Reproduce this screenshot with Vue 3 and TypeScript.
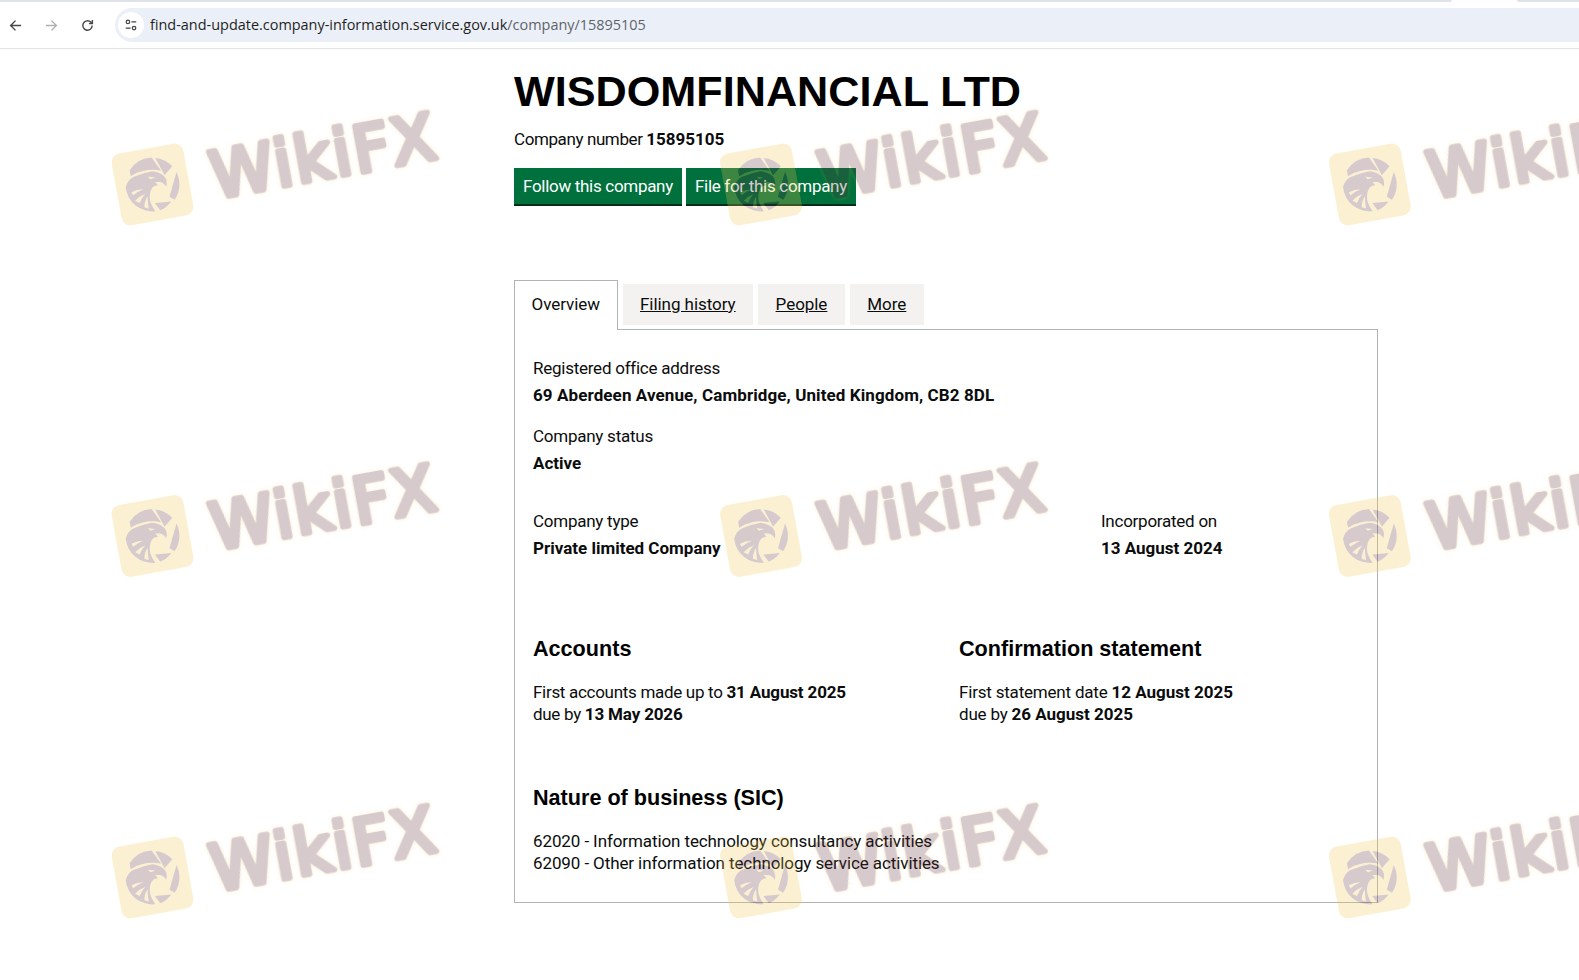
<template>
  <div class="screen">
    <header class="browser">
      <div class="tabstrip">
        <span class="strip-left"></span>
        <span class="strip-right"></span>
      </div>
      <div class="toolbar">
        <svg class="nav-icon" viewBox="0 0 16 16"><path d="M14 8H3M8 2.8 2.8 8 8 13.200" /></svg>
        <svg class="nav-icon nav-off" viewBox="0 0 16 16"><path d="M2 8h11M8 2.800 13.200 8 8 13.200" /></svg>
        <svg class="nav-icon" viewBox="0 0 16 16"><path d="M13 8a5 5 0 1 1-1.500-3.600L13 6M13.200 2.200V6H9.500" /></svg>
        <div class="omnibox">
          <span class="site-chip">
            <svg viewBox="0 0 16 16"><circle cx="4.500" cy="4.500" r="2" /><path d="M8.500 4.500H14M2 11.500h5.500" /><circle cx="11.500" cy="11.500" r="2" /></svg>
          </span>
          <span class="url">find-and-update.company-information.service.gov.uk<span class="url-path">/company/15895105</span></span>
        </div>
      </div>
    </header>

    <main class="page">
      <h1>WISDOMFINANCIAL LTD</h1>
      <p class="company-number">Company number <strong>15895105</strong></p>
      <div class="actions">
        <a class="button">Follow this company</a>
        <a class="button">File for this company</a>
      </div>

      <nav class="tabs">
        <span class="tab active">Overview</span>
        <a v-for="tab in tabs" :key="tab" class="tab">{{ tab }}</a>
      </nav>

      <section class="panel">
        <dl class="field first">
          <dt>Registered office address</dt>
          <dd class="address">69 Aberdeen Avenue, Cambridge, United Kingdom, CB2 8DL</dd>
        </dl>
        <dl class="field status">
          <dt>Company status</dt>
          <dd>Active</dd>
        </dl>
        <div class="type-row">
          <dl class="field type">
            <dt>Company type</dt>
            <dd>Private limited Company</dd>
          </dl>
          <dl class="field">
            <dt>Incorporated on</dt>
            <dd>13 August 2024</dd>
          </dl>
        </div>
        <div class="due-row">
          <div class="accounts">
            <h2>Accounts</h2>
            <p>First accounts made up to <strong>31 August 2025</strong></p>
            <p>due by <strong>13 May 2026</strong></p>
          </div>
          <div>
            <h2>Confirmation statement</h2>
            <p>First statement date <strong>12 August 2025</strong></p>
            <p>due by <strong>26 August 2025</strong></p>
          </div>
        </div>
        <div class="sic">
          <h2>Nature of business (SIC)</h2>
          <p v-for="code in sicCodes" :key="code">{{ code }}</p>
        </div>
      </section>
    </main>

    <svg class="watermark" width="1579" height="980" viewBox="0 0 1579 980">
      <defs>
        <g id="wm-mark">
          <path d="M-20-18A27 27 0 0 1 4-26.700L11-12Q2-15.500-7-15-14-15-20-12Z" />
          <path d="M7.400-25.500A27 27 0 0 1 22.800-14.400L13.500-7Z" />
          <path d="M25.800-8A27 27 0 0 1 19 19L14.500 15Z" />
          <path d="M-1 18.500 15.500 20A27 27 0 0 1 3 26.800Z" />
          <path fill-rule="evenodd" d="M-26.900-2Q-24-9-17-11-8-13 2-13 9-11 13-6 16-1 13 5 12 1 8-1L3-2Q5 0 5 2 0 1-3 6-6 12-5 18-4 23-2 26.900A27 27 0 0 1-26.900-2ZM-3-8.500 4-6.500-1-5.500ZM-22 4Q-16 2-10 3-15 4-21 7ZM-20 13Q-15 9-9 8-13 11-16 16ZM-12 21Q-11 15-7 11-8 17-8 23Z" />
        </g>
        <mask id="wm-plate" maskUnits="userSpaceOnUse" x="-50" y="-50" width="100" height="100">
          <rect x="-50" y="-50" width="100" height="100" fill="white" />
          <use href="#wm-mark" fill="black" />
        </mask>
      </defs>
      <g v-for="mark in marks" :key="mark.id" :transform="mark.transform">
        <rect class="wm-plate" x="-36.500" y="-36.500" width="73" height="73" rx="9" mask="url(#wm-plate)" />
        <use class="wm-mark" href="#wm-mark" />
        <text class="wm-text" x="59" y="25" textLength="227">WikiFX</text>
      </g>
    </svg>
  </div>
</template>

<script setup lang="ts">
const tabs = ['Filing history', 'People', 'More']
const sicCodes = [
  '62020 - Information technology consultancy activities',
  '62090 - Other information technology service activities'
]

// the stamp repeats over the whole page, three across and three down
const columns = [152.5, 761, 1369.8]
const rows = [184.5, 536, 877.5]
const marks = rows.flatMap((y) =>
  columns.map((x) => ({
    id: `${x}-${y}`,
    transform: `translate(${x} ${y}) rotate(-10.300)`
  }))
)
</script>

<style scoped>
.screen {
  position: relative;
  width: 1579px;
  height: 980px;
  overflow: hidden;
  background: #fff;
  color: #0b0c0c;
  font-family: Roboto, "Liberation Sans", sans-serif;
  font-size: 17px;
  letter-spacing: -0.2px;
}

strong,
dd {
  letter-spacing: 0;
}

.browser {
  height: 48px;
  border-bottom: 1px solid #e3e3e3;
  font-family: "Open Sans", "Liberation Sans", sans-serif;
  letter-spacing: 0;
}

.tabstrip {
  display: flex;
  justify-content: space-between;
  height: 2px;
}

.strip-left {
  width: 1452px;
  background: #dfe3e8;
  border-radius: 0 0 6px 0;
}

.strip-right {
  width: 62px;
  background: #dfe3e8;
  border-radius: 0 0 0 6px;
}

.toolbar {
  display: flex;
  align-items: center;
  height: 34px;
  margin-top: 6px;
  padding-left: 8px;
}

.nav-icon {
  width: 15px;
  height: 15px;
  margin-right: 21px;
  fill: none;
  stroke: #474747;
  stroke-width: 1.500;
}

.nav-off {
  stroke: #b0b0b0;
}

.omnibox {
  display: flex;
  flex: 1;
  align-items: center;
  height: 34px;
  margin-left: -1px;
  border-radius: 17px 0 0 17px;
  background: #ebf0f8;
}

.site-chip {
  display: flex;
  align-items: center;
  justify-content: center;
  width: 26px;
  height: 26px;
  margin-left: 3px;
  border-radius: 50%;
  background: #fff;
}

.site-chip svg {
  width: 14px;
  height: 14px;
  fill: none;
  stroke: #474747;
  stroke-width: 1.400;
}

.url {
  margin: 0 0 2px 6px;
  font-size: 14.450px;
  color: #1f1f1f;
  white-space: nowrap;
}

.url-path {
  color: #5f6368;
}

.page {
  width: 864px;
  margin-left: 514px;
}

h1 {
  margin: 17px 0 0;
  font-family: "Liberation Sans", Arial, sans-serif;
  font-size: 43.200px;
  line-height: 50px;
  font-weight: 700;
  letter-spacing: 0;
  color: #000;
}

.company-number {
  margin: 12px 0 0;
  line-height: 22px;
  letter-spacing: -0.400px;
}

.actions {
  display: flex;
  gap: 4px;
  margin-top: 18px;
}

.button {
  display: flex;
  align-items: center;
  height: 36px;
  padding: 0 9px;
  border-bottom: 2px solid #002d18;
  background: #00703c;
  color: #fff;
  letter-spacing: -0.300px;
}

.tabs {
  display: flex;
  align-items: flex-start;
  gap: 5px;
  margin-top: 74px;
}

.tab {
  position: relative;
  display: flex;
  align-items: center;
  box-sizing: border-box;
  height: 41px;
  margin-top: 4px;
  padding: 0 17.500px 2px;
  background: #f3f2f1;
  color: #0b0c0c;
  letter-spacing: -0.050px;
  text-decoration: underline;
}

.tab.active {
  z-index: 1;
  height: 50px;
  margin-top: 0;
  margin-bottom: -1px;
  padding: 0 16.500px 3px;
  border: 1px solid #b1b4b6;
  border-bottom: 0;
  background: #fff;
  text-decoration: none;
}

.panel {
  height: 574px;
  padding: 27px 18px 0;
  border: 1px solid #b1b4b6;
  box-sizing: border-box;
}

dl {
  margin: 0;
}

dt {
  line-height: 22px;
  letter-spacing: -0.250px;
}

dd {
  margin: 5px 0 0;
  line-height: 22px;
  font-weight: 700;
}

.address {
  letter-spacing: 0.100px;
}

.status {
  margin-top: 19px;
}

.type-row {
  display: flex;
  margin-top: 36px;
}

.type {
  width: 568px;
}

.due-row {
  display: grid;
  grid-template-columns: 426px 1fr;
  margin-top: 75px;
}

.accounts p {
  letter-spacing: -0.300px;
}

.accounts strong {
  letter-spacing: -0.150px;
}

h2 {
  margin: 0 0 17px;
  font-family: "Liberation Sans", Arial, sans-serif;
  font-size: 21.600px;
  line-height: 30px;
  font-weight: 700;
  letter-spacing: 0;
  color: #000;
}

.panel p {
  margin: 0;
  line-height: 22px;
}

.sic {
  margin-top: 58px;
  letter-spacing: -0.100px;
}

.watermark {
  position: absolute;
  top: 0;
  left: 0;
  pointer-events: none;
}

.wm-plate {
  fill: #f0c850;
  opacity: 0.25;
}

.wm-mark {
  fill: #64323c;
  opacity: 0.25;
}

.wm-text {
  fill: #64323c;
  stroke: #64323c;
  stroke-width: 5.500px;
  stroke-linejoin: round;
  opacity: 0.25;
  filter: drop-shadow(0 0 2px #f0c850);
  font-family: "DejaVu Sans", sans-serif;
  font-size: 64px;
}
</style>

<style>
html,
body {
  margin: 0;
  background: #fff;
}
</style>
